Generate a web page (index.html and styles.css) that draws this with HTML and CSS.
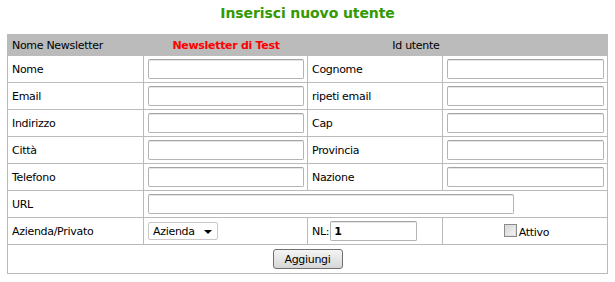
FILE: index.html
```html
<!DOCTYPE html>
<html>
<head>
<meta charset="utf-8">
<link rel="stylesheet" href="styles.css">
</head>
<body>
<div class="page">
  <h1 class="title">Inserisci nuovo utente</h1>
  <table class="form">
    <colgroup>
      <col class="c1"><col class="c2"><col class="c3"><col class="c4">
    </colgroup>
    <tr class="head">
      <td>Nome Newsletter</td>
      <td class="nl-name">Newsletter di Test</td>
      <td class="id-label">Id utente</td>
      <td></td>
    </tr>
    <tr>
      <td>Nome</td><td><input class="field" type="text"></td>
      <td>Cognome</td><td><input class="field" type="text"></td>
    </tr>
    <tr>
      <td>Email</td><td><input class="field" type="text"></td>
      <td>ripeti email</td><td><input class="field" type="text"></td>
    </tr>
    <tr>
      <td>Indirizzo</td><td><input class="field" type="text"></td>
      <td>Cap</td><td><input class="field" type="text"></td>
    </tr>
    <tr>
      <td>Città</td><td><input class="field" type="text"></td>
      <td>Provincia</td><td><input class="field" type="text"></td>
    </tr>
    <tr>
      <td>Telefono</td><td><input class="field" type="text"></td>
      <td>Nazione</td><td><input class="field" type="text"></td>
    </tr>
    <tr>
      <td>URL</td><td colspan="3"><input class="field url" type="text"></td>
    </tr>
    <tr>
      <td>Azienda/Privato</td>
      <td><span class="select-wrap"><select class="select"><option>Azienda</option><option>Privato</option></select></span></td>
      <td><span class="nl-row">NL:<input class="field nl" type="text" value="1"></span></td>
      <td class="center"><label class="check"><input class="box" type="checkbox"><span class="check-text">Attivo</span></label></td>
    </tr>
    <tr class="actions">
      <td colspan="4"><button class="btn" type="button">Aggiungi</button></td>
    </tr>
  </table>
</div>
</body>
</html>
```

FILE: styles.css
```css
html, body {
  margin: 0;
  padding: 0;
  background: #fff;
}
body {
  font-family: "DejaVu Sans", Verdana, sans-serif;
  font-size: 11px;
  letter-spacing: -0.3px;
  color: #000;
}
.page {
  padding: 0 7px;
}
.title {
  margin: 0;
  padding-top: 4px;
  height: 34px;
  line-height: 18px;
  font-size: 14px;
  letter-spacing: -0.1px;
  font-weight: bold;
  color: #339900;
  text-align: center;
  box-sizing: border-box;
}
.form {
  width: 601px;
  table-layout: fixed;
  border-collapse: collapse;
  border: 1px solid #bbb;
}
.c1 { width: 136px; }
.c2 { width: 164px; }
.c3 { width: 135px; }
.c4 { width: 165px; }
.form td {
  border: 1px solid #bbb;
  padding: 3px 3px 3px 4px;
  height: 20px;
  vertical-align: middle;
  white-space: nowrap;
}
.form tr.head td {
  background: #bbb;
  border-left: none;
  border-right: none;
  height: 14px;
  padding-top: 3px;
  padding-bottom: 3px;
}
.nl-name {
  color: #f00;
  font-weight: bold;
  text-align: center;
}
.form td.id-label {
  text-align: right;
}
.field {
  display: block;
  box-sizing: border-box;
  width: 100%;
  height: 20px;
  margin: 0;
  padding: 1px 4px;
  border: 1px solid #b4b4b4;
  border-top-color: #a4a4a4;
  border-radius: 2px;
  box-shadow: inset 0 1px 0 #e6e6e6;
  background: #fff;
  font-family: "DejaVu Sans", Verdana, sans-serif;
  font-size: 11px;
  color: #000;
  outline: none;
}
.field.url {
  width: 366px;
}
.nl-row {
  display: flex;
  align-items: center;
  gap: 1px;
}
.field.nl {
  width: 87px;
  font-weight: bold;
  padding-left: 3px;
}
.select-wrap {
  position: relative;
  display: inline-block;
  vertical-align: middle;
}
.select {
  appearance: none;
  -webkit-appearance: none;
  box-sizing: border-box;
  width: 70px;
  height: 18px;
  margin: 0;
  padding: 0 0 0 4px;
  border: 1px solid #c8c8c8;
  border-radius: 2px;
  background: #fff;
  font-family: "DejaVu Sans", Verdana, sans-serif;
  font-size: 11px;
  letter-spacing: -0.3px;
  color: #000;
  display: block;
}
.select-wrap::after {
  content: "";
  position: absolute;
  right: 6px;
  top: 8px;
  border-left: 4px solid transparent;
  border-right: 4px solid transparent;
  border-top: 4px solid #000;
  pointer-events: none;
}
.center {
  text-align: center;
}
.check {
  display: inline-flex;
  align-items: flex-end;
  gap: 2px;
  padding-left: 2px;
  margin-top: 2px;
}
.box {
  appearance: none;
  -webkit-appearance: none;
  width: 13px;
  height: 13px;
  margin: 0 0 2px 0;
  border: 1px solid #8a8a8a;
  box-sizing: border-box;
  background: linear-gradient(135deg, #d4d4d4, #f6f6f6);
  box-shadow: inset 0 0 0 1px #e0e0e0;
}
.check-text {
  line-height: 13px;
}
.form tr.actions td {
  text-align: center;
  height: 20px;
  padding: 4px 0;
}
.btn {
  appearance: none;
  -webkit-appearance: none;
  box-sizing: border-box;
  width: 70px;
  height: 20px;
  margin: 0;
  padding: 0;
  border: 1px solid #707070;
  border-radius: 3px;
  background: linear-gradient(#f4f4f4, #e6e6e6 50%, #d6d6d6);
  font-family: "DejaVu Sans", Verdana, sans-serif;
  font-size: 11px;
  letter-spacing: -0.3px;
  color: #000;
  vertical-align: middle;
}
```
